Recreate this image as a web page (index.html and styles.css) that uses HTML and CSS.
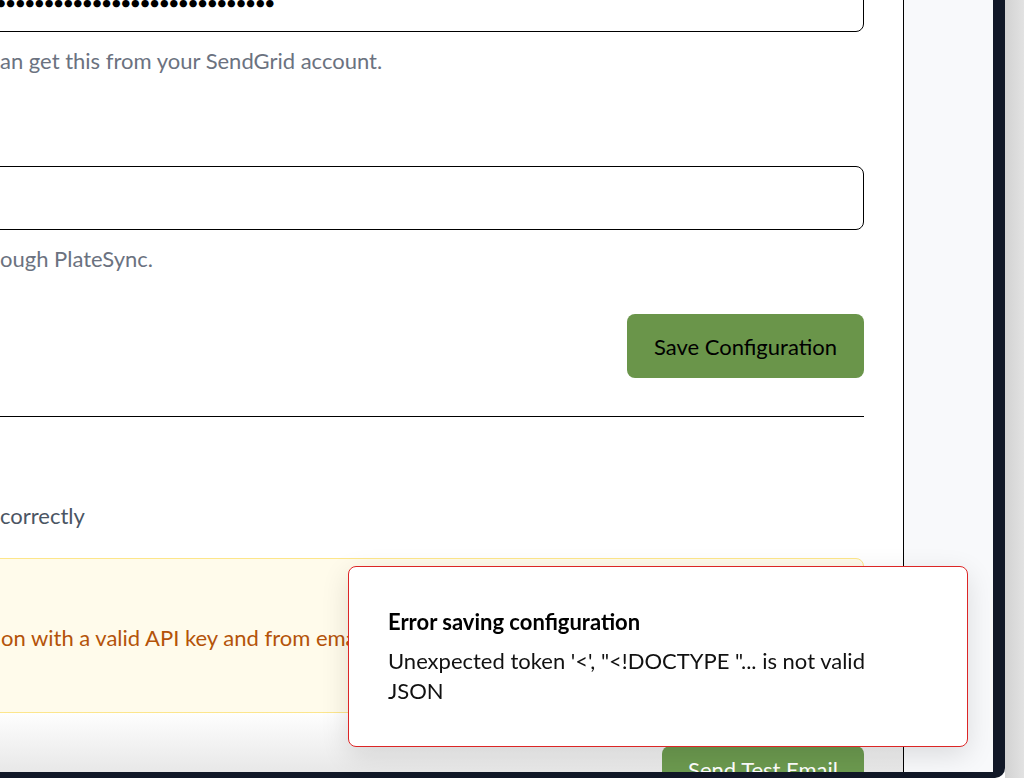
FILE: index.html
```html
<!DOCTYPE html>
<html lang="en">
<head>
<meta charset="utf-8">
<title>SendGrid Configuration</title>
<link rel="stylesheet" href="styles.css">
</head>
<body>
<div class="screen">
  <div class="frame">
    <div class="app">
      <main class="main">
        <div class="content">
          <input class="field pw" type="password" value="sendgridapikeyvalue0123456789ab" aria-label="API Key">
          <p class="help">an get this from your SendGrid account.</p>
          <input class="field field-two" type="text" aria-label="From Email">
          <p class="help">ough PlateSync.</p>
          <div class="actions save-row"><button class="btn">Save Configuration</button></div>
          <hr class="rule">
          <p class="desc">correctly</p>
          <div class="notice"><p class="notice-text">on with a valid API key and from email</p></div>
          <div class="actions send-row"><button class="btn btn-send">Send Test Email</button></div>
        </div>
        <div class="fade"></div>
      </main>
      <aside class="side"></aside>
    </div>
  </div>
  <div class="gutter"></div>
</div>
<div class="toast" role="alert">
  <p class="toast-title">Error saving configuration</p>
  <p class="toast-msg">Unexpected token '&lt;', "&lt;!DOCTYPE "... is not valid JSON</p>
</div>
</body>
</html>
```

FILE: styles.css
```css
html, body {
  margin: 0;
  padding: 0;
}
body {
  font-family: Lato, "Noto Sans", sans-serif;
  width: 1024px;
  height: 778px;
  overflow: hidden;
}
.screen {
  display: flex;
  width: 1024px;
  height: 778px;
  overflow: hidden;
}
.frame {
  width: 1005px;
  flex: none;
  display: flex;
  box-sizing: border-box;
  padding: 0 12px 6px 0;
  background: #111827;
  border-bottom-right-radius: 10px;
}
.gutter {
  flex: 1;
  background: linear-gradient(to right, #d2d2d2, #e2e2e2);
}
.app {
  flex: 1;
  display: flex;
  overflow: hidden;
}
.main {
  width: 904px;
  flex: none;
  box-sizing: border-box;
  border-right: 1px solid #000;
  background: #fff;
  position: relative;
  overflow: hidden;
}
.side {
  flex: 1;
  background: #f8f9fb;
}
.content {
  margin: -32px 39px 0 -40px;
}
.field {
  display: block;
  width: 100%;
  height: 64px;
  box-sizing: border-box;
  border: 1px solid #000;
  border-radius: 8px;
  padding: 0 16px;
  font-family: Lato, sans-serif;
  font-size: 22px;
  color: #000;
  background: #fff;
  outline: none;
}
.pw {
  padding: 3px 0 0 15px;
  font-size: 20px;
  letter-spacing: -2px;
}
.field-two {
  margin-top: 91px;
}
.help {
  margin: 15px 0 0;
  padding-left: 40px;
  font-size: 22px;
  line-height: 28px;
  color: #6b7280;
}
.actions {
  display: flex;
  justify-content: flex-end;
  position: relative;
  z-index: 1;
}
.save-row {
  margin-top: 41px;
}
.btn {
  height: 64px;
  padding: 0 27px;
  border: none;
  border-radius: 8px;
  background: #6a954a;
  color: #000;
  font-family: Lato, sans-serif;
  font-size: 22px;
}
.rule {
  margin: 38px 0 0;
  border: none;
  border-top: 1px solid #000;
  height: 0;
}
.desc {
  margin: 85px 0 0;
  padding-left: 40px;
  font-size: 22px;
  line-height: 28px;
  color: #4b5563;
}
.notice {
  margin-top: 28px;
  height: 155px;
  box-sizing: border-box;
  border: 1px solid #fde68a;
  border-radius: 8px;
  background: #fffbeb;
  padding: 65px 0 0 40px;
}
.notice-text {
  margin: 0;
  font-size: 22px;
  line-height: 28px;
  color: #b45309;
  white-space: nowrap;
}
.send-row {
  margin-top: 33px;
}
.btn-send {
  height: auto;
  padding: 9px 26px 30px;
  line-height: 30px;
  color: #fff;
  background: #6c9a4f;
}
.fade {
  position: absolute;
  left: 0;
  right: 0;
  bottom: 0;
  height: 62px;
  background: linear-gradient(to bottom, rgba(226, 226, 226, 0), rgba(226, 226, 226, 0.8));
  pointer-events: none;
}
.toast {
  position: fixed;
  left: 348px;
  top: 566px;
  width: 620px;
  height: 181px;
  box-sizing: border-box;
  padding: 40px 80px 0 39px;
  background: #fff;
  border: 1px solid #dc2626;
  border-radius: 8px;
  box-shadow: 0 8px 28px rgba(0, 0, 0, 0.12);
  z-index: 5;
}
.toast-title {
  margin: 0;
  font-size: 22px;
  font-weight: 700;
  line-height: 30px;
  color: #000;
}
.toast-msg {
  margin: 9px 0 0;
  font-size: 22px;
  line-height: 30px;
  color: #111;
}
```
